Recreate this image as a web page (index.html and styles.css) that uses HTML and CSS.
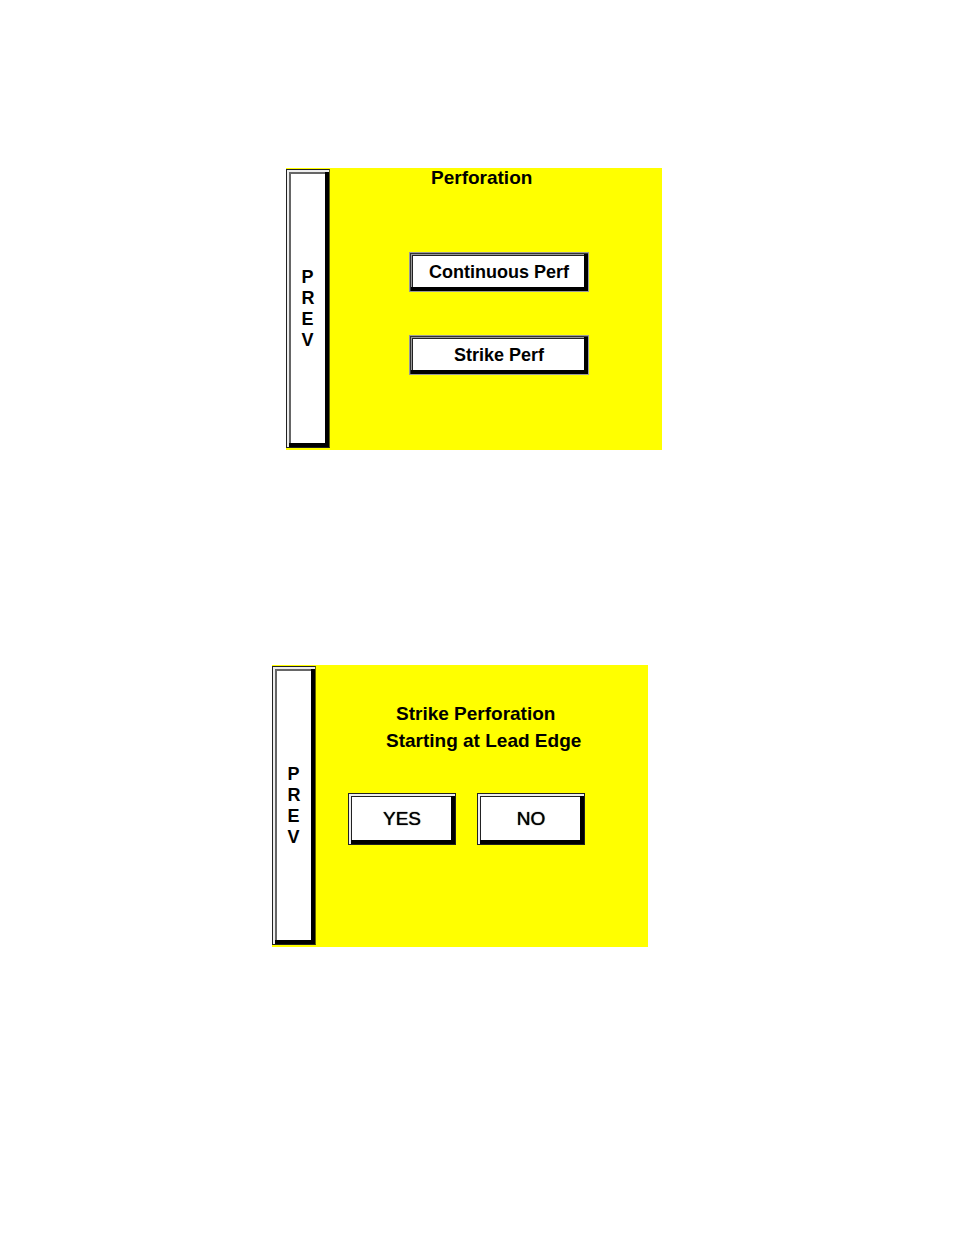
FILE: index.html
```html
<!DOCTYPE html>
<html lang="en">
<head>
    <meta charset="UTF-8">
    <meta name="viewport" content="width=device-width, initial-scale=1.0">
    <title>Perforation</title>
    <link rel="stylesheet" href="styles.css">
</head>
<body>
    <!-- Perforation type -->
    <section class="screen screen-type">
        <button type="button" class="key prev"><span>P<br>R<br>E<br>V</span></button>
        <div class="content">
            <h1 class="title">Perforation</h1>
            <div class="choices">
                <button type="button" class="key choice">Continuous Perf</button>
                <button type="button" class="key choice">Strike Perf</button>
            </div>
        </div>
    </section>

    <!-- Strike perforation start -->
    <section class="screen screen-strike">
        <button type="button" class="key prev"><span>P<br>R<br>E<br>V</span></button>
        <div class="content">
            <h2 class="title">Strike Perforation</h2>
            <p class="title question">Starting at Lead Edge</p>
            <div class="answers">
                <button type="button" class="key answer">YES</button>
                <button type="button" class="key answer">NO</button>
            </div>
        </div>
    </section>
</body>
</html>
```
FILE: styles.css
```css
* {
    box-sizing: border-box;
    margin: 0;
    padding: 0;
}

body {
    font-family: "Liberation Sans", Arial, sans-serif;
    background-color: #fff;
    color: #000;
    padding: 168px 20px 168px 272px;
}

.screen {
    display: flex;
    max-width: 376px;
    min-height: 282px;
    background-color: #ff0;
}

.screen-type {
    margin-left: 14px;
    margin-bottom: 215px;
}

.content {
    flex: 1;
}

.title {
    font-size: 19px;
    font-weight: bold;
    line-height: 27px;
}

/* Raised keys */
.key {
    background-color: #fff;
    border: 1px solid #222;
    box-shadow: inset 2px 2px 0 #eee, inset -4px -4px 0 #000, inset 4px 4px 0 #666;
    color: #000;
    font-family: inherit;
    font-size: 18px;
    font-weight: bold;
    cursor: pointer;
}

.prev {
    width: 44px;
    margin: 1px 0 2px;
    border-right-color: #660;
    line-height: 21px;
}

.prev span {
    display: inline-block;
    text-align: left;
}

/* Perforation type */
.screen-type .content {
    padding-left: 79px;
}

.screen-type .title {
    line-height: 20px;
    padding-left: 22px;
}

.choices {
    display: flex;
    flex-direction: column;
    gap: 43px;
    margin-top: 64px;
}

.choice {
    width: 180px;
    height: 40px;
    border-color: #999;
    box-shadow: inset 1px 1px 0 #333, inset -4px -4px 0 #000, inset 2px 2px 0 #999, inset 3px 3px 0 #222;
}

/* Strike perforation start */
.screen-strike .content {
    padding: 35px 0 0 32px;
}

.screen-strike .title {
    padding-left: 48px;
}

.screen-strike .question {
    padding-left: 38px;
}

.answers {
    display: flex;
    gap: 21px;
    margin-top: 39px;
}

.answer {
    width: 108px;
    height: 52px;
    font-size: 19px;
    font-weight: normal;
    text-shadow: 0 0 1px #000;
    box-shadow: inset 2px 2px 0 #eee, inset -4px -4px 0 #000, inset 3px 3px 0 #222;
}
```
